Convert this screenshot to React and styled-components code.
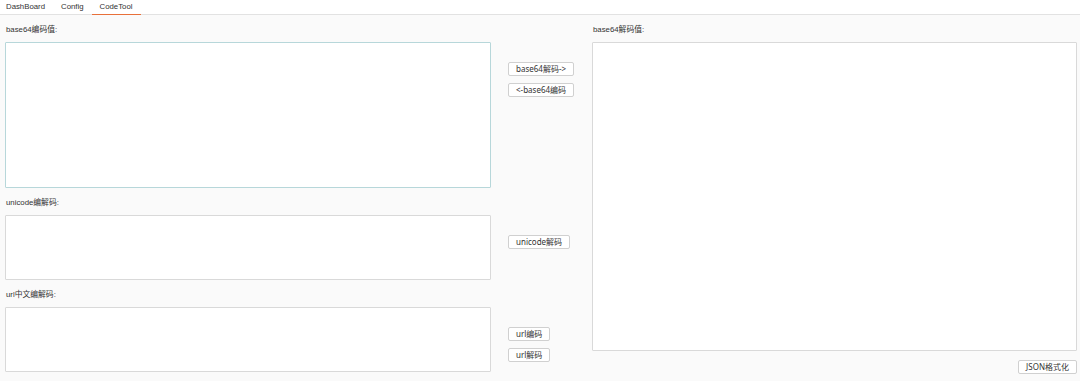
import React from "react";
import styled, { createGlobalStyle } from "styled-components";

const GlobalStyle = createGlobalStyle`
    body {
        margin: 0;
        background-color: #fafafa;
        font-family: "Liberation Sans", "Noto Sans CJK SC", sans-serif;
        color: #333333;
    }
`

const TabBar = styled.div`
    display: flex;
    height: 14px;
    background-color: #ffffff;
    border-bottom: 1px solid #e2e2e2;
`

const Tab = styled.div`
    position: relative;
    padding: 0 8px;
    margin-left: ${p => p.first ? "-2px" : "0"};
    font-size: 7.8px;
    line-height: 14px;
    color: #333333;
    cursor: pointer;

    &::after {
        content: "";
        display: ${p => p.active ? "block" : "none"};
        position: absolute;
        left: 0;
        right: 0;
        bottom: -1px;
        height: 1px;
        background-color: #e8703a;
    }
`

const Main = styled.div`
    display: grid;
    grid-template-columns: 486px 1fr 485px;
    grid-template-rows: 173px 92px 92px;
    padding: 0 3px 9px 5px;
`

const Section = styled.div`
    display: flex;
    flex-direction: column;
`

const Label = styled.div`
    height: 27px;
    display: flex;
    align-items: center;
    padding-left: 1px;
    font-size: 7.8px;
    color: #333333;
`

const TextArea = styled.textarea`
    flex: ${p => p.fixed ? "none" : "1"};
    height: ${p => p.fixed ? p.fixed + "px" : "auto"};
    box-sizing: border-box;
    width: 100%;
    margin: 0;
    resize: none;
    outline: none;
    background-color: #ffffff;
    border: 1px solid ${p => p.focused ? "#b7d7da" : "#d9d9d9"};
    border-radius: 1px;
`

const Actions = styled.div`
    display: flex;
    flex-direction: column;
    align-items: flex-start;
    gap: 7px;
    padding: 47px 0 0 17px;
`

const Btn = styled.button`
    height: 14px;
    box-sizing: border-box;
    padding: 0 7px;
    background-color: #ffffff;
    border: 1px solid #d0d0d0;
    border-radius: 2px;
    font-family: "Noto Sans", "Noto Sans CJK SC", sans-serif;
    font-size: 8px;
    line-height: 12px;
    color: #333333;
    cursor: pointer;
`

const RightPane = styled.div`
    grid-column: 3;
    grid-row: 1 / 4;
    display: flex;
    flex-direction: column;
    margin-bottom: -2px;
`

const RightFooter = styled.div`
    display: flex;
    justify-content: flex-end;
    padding-top: 9px;
`

function App() {
    const tabs = ["DashBoard", "Config", "CodeTool"];

    return (
        <>
            <GlobalStyle />
            <TabBar>
                {tabs.map((t, i) => (
                    <Tab key={t} first={i === 0} active={t === "CodeTool"}>{t}</Tab>
                ))}
            </TabBar>
            <Main>
                <Section>
                    <Label>base64编码值:</Label>
                    <TextArea focused />
                </Section>
                <Actions>
                    <Btn>base64解码-&gt;</Btn>
                    <Btn>&lt;-base64编码</Btn>
                </Actions>
                <RightPane>
                    <Label>base64解码值:</Label>
                    <TextArea fixed={309} />
                    <RightFooter>
                        <Btn>JSON格式化</Btn>
                    </RightFooter>
                </RightPane>

                <Section>
                    <Label>unicode编解码:</Label>
                    <TextArea />
                </Section>
                <Actions>
                    <Btn>unicode解码</Btn>
                </Actions>

                <Section>
                    <Label>url中文编解码:</Label>
                    <TextArea />
                </Section>
                <Actions>
                    <Btn>url编码</Btn>
                    <Btn>url解码</Btn>
                </Actions>
            </Main>
        </>
    )
}

export default App
